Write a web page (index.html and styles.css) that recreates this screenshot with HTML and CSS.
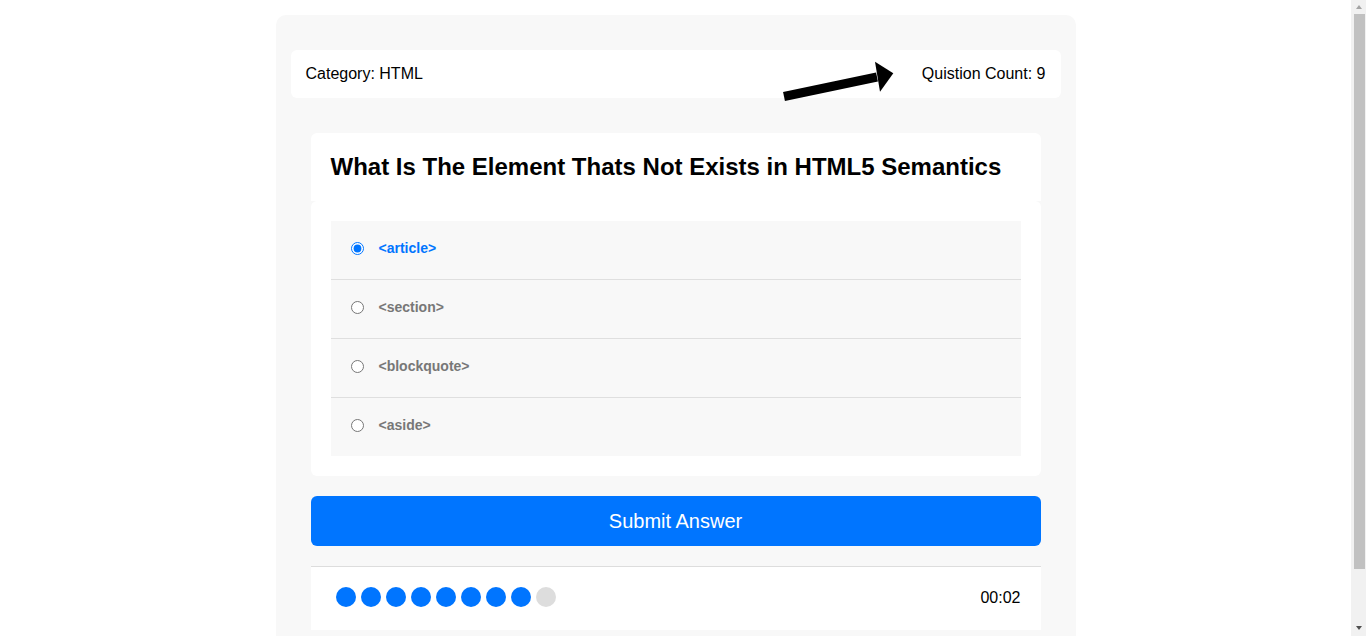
FILE: index.html
```html
<!DOCTYPE html>
<html lang="en">
<head>
<meta charset="utf-8">
<title>Quiz App</title>
<link rel="stylesheet" href="styles.css">
</head>
<body>
<div class="quiz-app">
  <div class="quiz-info">
    <div class="category">Category: <span>HTML</span></div>
    <svg class="arrow" width="116" height="46" viewBox="0 0 116 46" aria-hidden="true">
      <line x1="4" y1="38.5" x2="97" y2="19" stroke="#000" stroke-width="9"/>
      <polygon points="95,3.7 113.3,15.3 100,33.7" fill="#000"/>
    </svg>
    <div class="count">Quistion Count: <span>9</span></div>
  </div>
  <div class="quiz-area">
    <h2>What Is The Element Thats Not Exists in HTML5 Semantics</h2>
  </div>
  <div class="answers-area">
    <div class="answer">
      <input type="radio" name="question" id="answer_1" checked>
      <label for="answer_1">&lt;article&gt;</label>
    </div>
    <div class="answer">
      <input type="radio" name="question" id="answer_2">
      <label for="answer_2">&lt;section&gt;</label>
    </div>
    <div class="answer">
      <input type="radio" name="question" id="answer_3">
      <label for="answer_3">&lt;blockquote&gt;</label>
    </div>
    <div class="answer">
      <input type="radio" name="question" id="answer_4">
      <label for="answer_4">&lt;aside&gt;</label>
    </div>
  </div>
  <button class="submit-button">Submit Answer</button>
  <div class="bullets">
    <div class="spans">
      <span class="on"></span><span class="on"></span><span class="on"></span><span class="on"></span><span class="on"></span><span class="on"></span><span class="on"></span><span class="on"></span><span></span>
    </div>
    <div class="countdown">00:02</div>
  </div>
</div>
<div class="scrollbar" aria-hidden="true">
  <div class="sb-up"></div>
  <div class="sb-thumb"></div>
  <div class="sb-track"></div>
  <div class="sb-down"></div>
</div>
</body>
</html>
```
FILE: styles.css
```css
* {
  box-sizing: border-box;
}
body {
  margin: 0 15px 0 0;
  font-family: "Liberation Sans", Arial, sans-serif;
  color: #000;
}
.scrollbar {
  position: fixed;
  top: 0;
  right: 0;
  width: 15px;
  height: 100vh;
  background: #f1f1f1;
  display: flex;
  flex-direction: column;
  align-items: center;
}
.sb-up {
  margin-top: 5px;
  width: 0;
  height: 0;
  border-left: 3.5px solid transparent;
  border-right: 3.5px solid transparent;
  border-bottom: 4px solid #a3a3a3;
}
.sb-thumb {
  margin-top: 5px;
  width: 11px;
  height: 555px;
  background: #c1c1c1;
  margin-left: 1px;
}
.sb-track {
  flex: 1;
}
.sb-down {
  margin-bottom: 6px;
  width: 0;
  height: 0;
  border-left: 3.5px solid transparent;
  border-right: 3.5px solid transparent;
  border-top: 4px solid #505050;
}
.quiz-app {
  width: 800px;
  margin: 15px auto;
  background: #f8f8f8;
  border-radius: 10px;
  padding: 35px 15px 44px;
}
.quiz-info {
  position: relative;
  display: flex;
  justify-content: space-between;
  align-items: center;
  background: #fff;
  border-radius: 6px;
  padding: 15px;
  font-size: 16px;
  line-height: 18px;
}
.arrow {
  position: absolute;
  left: 489px;
  top: 8px;
}
.quiz-area {
  margin: 35px 20px 0;
  background: #fff;
  padding: 20px;
  border-radius: 6px 6px 0 0;
}
.quiz-area h2 {
  margin: 0;
  font-size: 24px;
  font-weight: bold;
}
.answers-area {
  margin: 0 20px;
  background: #fff;
  padding: 20px;
  border-radius: 6px;
}
.answer {
  display: flex;
  align-items: center;
  height: 59px;
  padding-left: 20px;
  padding-bottom: 4px;
  background: #f8f8f8;
  border-bottom: 1px solid #dfdfdf;
}
.answer:last-child {
  border-bottom: none;
  height: 58px;
}
.answer input {
  margin: 0 15px 0 0;
  width: 13px;
  height: 13px;
}
.answer label {
  font-size: 14px;
  font-weight: bold;
  color: #777;
}
.answer input:checked + label {
  color: #0075ff;
}
.submit-button {
  display: block;
  width: 730px;
  height: 50px;
  margin: 20px 20px 0;
  background: #0075ff;
  color: #fff;
  border: none;
  border-radius: 6px;
  font-family: "Liberation Sans", Arial, sans-serif;
  font-size: 20px;
  padding: 0;
}
.bullets {
  display: flex;
  justify-content: space-between;
  align-items: center;
  margin: 20px 20px 0;
  background: #fff;
  border-top: 1px solid #ddd;
  padding: 20px 20px 23px 25px;
}
.spans {
  display: flex;
}
.spans span {
  width: 20px;
  height: 20px;
  border-radius: 50%;
  background: #ddd;
  margin-right: 5px;
}
.spans span.on {
  background: #0075ff;
}
.countdown {
  font-size: 16px;
  padding-top: 2px;
}
```
